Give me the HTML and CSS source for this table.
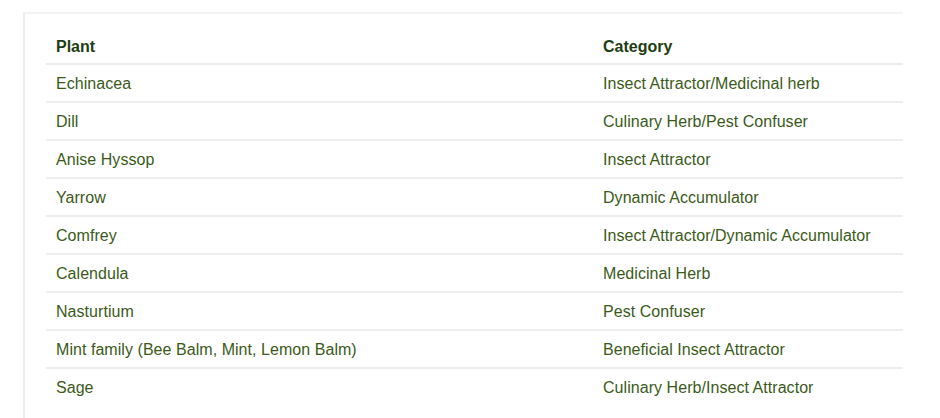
FILE: index.html
```html
<!DOCTYPE html>
<html lang="en">
<head>
<meta charset="utf-8">
<title>Companion Plants</title>
<link rel="stylesheet" href="styles.css">
</head>
<body>
<div class="card">
  <table class="plants">
    <thead>
      <tr><th class="col-plant">Plant</th><th>Category</th></tr>
    </thead>
    <tbody>
      <tr><td>Echinacea</td><td>Insect Attractor/Medicinal herb</td></tr>
      <tr><td>Dill</td><td>Culinary Herb/Pest Confuser</td></tr>
      <tr><td>Anise Hyssop</td><td>Insect Attractor</td></tr>
      <tr><td>Yarrow</td><td>Dynamic Accumulator</td></tr>
      <tr><td>Comfrey</td><td>Insect Attractor/Dynamic Accumulator</td></tr>
      <tr><td>Calendula</td><td>Medicinal Herb</td></tr>
      <tr><td>Nasturtium</td><td>Pest Confuser</td></tr>
      <tr><td>Mint family (Bee Balm, Mint, Lemon Balm)</td><td>Beneficial Insect Attractor</td></tr>
      <tr><td>Sage</td><td>Culinary Herb/Insect Attractor</td></tr>
    </tbody>
  </table>
</div>
</body>
</html>
```
FILE: styles.css
```css
html, body {
  margin: 0;
  padding: 0;
  background: #ffffff;
}
body {
  padding: 12px 0 0 23px;
  font-family: "Liberation Sans", Arial, sans-serif;
  font-size: 16px;
  overflow: hidden;
}
.card {
  width: 880px;
  box-sizing: border-box;
  border-top: 2px solid #f3f3f3;
  border-left: 2px solid #eeeeee;
  padding: 12px 0 30px 21px;
}
.plants {
  width: 100%;
  border-collapse: collapse;
}
.plants th,
.plants td {
  text-align: left;
  padding: 0 10px;
  line-height: 18px;
  vertical-align: middle;
}
.plants th {
  color: #1f3d12;
  font-weight: bold;
  height: 33px;
  padding-top: 4px;
  padding-bottom: 0;
  border-bottom: 2px solid #ececec;
}
.plants td {
  color: #3b5a1a;
  border-bottom: 2px solid #eeeeee;
  letter-spacing: 0.05px;
  height: 35px;
  padding-top: 1px;
}
.plants tbody tr:last-child td {
  border-bottom: none;
}
.col-plant {
  width: 527px;
}
```
